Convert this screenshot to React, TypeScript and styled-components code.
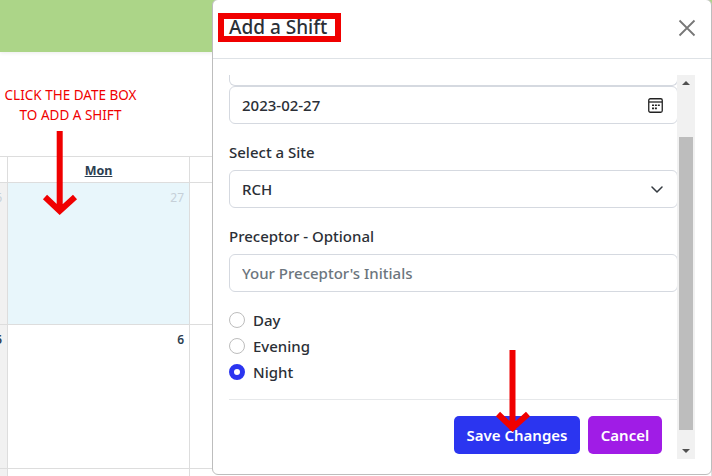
import * as React from 'react';
import styled, { createGlobalStyle } from 'styled-components';

const GlobalStyle = createGlobalStyle`
  html, body {
    margin: 0;
    padding: 0;
    background: #fff;
  }
  * {
    box-sizing: border-box;
  }
`;

const Page = styled.div`
  position: relative;
  width: 712px;
  height: 476px;
  overflow: hidden;
  background: #fff;
  font-family: "Noto Sans", "Open Sans", sans-serif;
`;

const TopBar = styled.div`
  height: 52px;
  background: #acd588;
  box-shadow: 0 1px 4px rgba(0, 0, 0, 0.08);
`;

const Notice = styled.div`
  height: 104px;
  width: 141px;
  padding-top: 33px;
  text-align: center;
  color: #f00000;
  font-size: 13.5px;
  line-height: 20px;
`;

const Calendar = styled.div`
  display: grid;
  grid-template-columns: 8px 182px 1fr;
  grid-template-rows: 26px 142px 144px 10px;
  border-top: 1px solid #ddd;
`;

const Cell = styled.div<{ $bg?: string; $muted?: boolean; $last?: boolean }>`
  display: flex;
  justify-content: flex-end;
  overflow: hidden;
  padding: 6px 5px 0 0;
  background: ${(p) => p.$bg || '#fff'};
  border-right: 1px solid #ddd;
  border-bottom: ${(p) => (p.$last ? 'none' : '1px solid #ddd')};
  color: ${(p) => (p.$muted ? '#c6d0d8' : '#2c3e50')};
  font-size: 12px;
  font-weight: ${(p) => (p.$muted ? 400 : 600)};
  line-height: 17px;
`;

const HeadCell = styled(Cell)`
  justify-content: center;
  padding: 5px 0 0;
  font-size: 12.5px;
  font-weight: 700;
  text-decoration: underline;
`;

const Modal = styled.div`
  position: absolute;
  top: -1px;
  left: 212px;
  width: 500px;
  height: 476px;
  display: flex;
  flex-direction: column;
  background: #fff;
  border: 1px solid #bdbdbd;
  border-radius: 6px;
`;

const ModalHeader = styled.div`
  height: 59px;
  flex: none;
  display: flex;
  align-items: center;
  justify-content: space-between;
  padding: 0 15px 3px 5px;
  border-bottom: 1px solid #dee2e6;
`;

const Title = styled.h2`
  margin: 0;
  width: 123px;
  height: 29px;
  padding-left: 5px;
  border: 6px solid #f00000;
  color: #2b2f36;
  font-size: 19px;
  font-weight: 500;
  line-height: 17px;
  white-space: nowrap;
`;

const CloseButton = styled.button`
  display: flex;
  width: 18px;
  height: 18px;
  padding: 0;
  border: 0;
  background: none;
  color: #777;
`;

const ModalBody = styled.div`
  flex: 1;
  display: flex;
  align-items: flex-start;
  padding: 16px 16px 0 16px;
`;

const Form = styled.form`
  width: 449px;
  height: 384px;
  overflow: hidden;
`;

const ClippedField = styled.div`
  height: 12px;
  margin-top: -1px;
  border: 1px solid #d5d9e0;
  border-top: 0;
  border-radius: 0 0 6px 6px;
`;

const FieldWrap = styled.div`
  position: relative;
`;

const TextInput = styled.input`
  display: block;
  width: 100%;
  height: 38px;
  padding: 0 12px;
  border: 1px solid #d5d9e0;
  border-radius: 6px;
  background: #fff;
  color: #2b2f36;
  font-family: inherit;
  font-size: 15px;
  font-weight: 500;
  outline: none;
  &::placeholder {
    color: #6c757d;
    opacity: 1;
  }
`;

const FieldIcon = styled.span`
  position: absolute;
  top: 0;
  right: 0;
  bottom: 0;
  display: flex;
  align-items: center;
  padding-right: 15px;
  color: #222;
`;

const Label = styled.label`
  display: block;
  margin: 17px 0 7px;
  color: #2b2f36;
  font-size: 15px;
  font-weight: 500;
  line-height: 22px;
`;

const RadioList = styled.div`
  display: flex;
  flex-direction: column;
  gap: 4px;
  margin-top: 17px;
`;

const RadioRow = styled.label`
  display: flex;
  align-items: center;
  gap: 8px;
  height: 22px;
  color: #2b2f36;
  font-size: 15px;
  font-weight: 500;
`;

const Radio = styled.input`
  appearance: none;
  width: 16px;
  height: 16px;
  margin: 0;
  border: 1px solid #bdbdbd;
  border-radius: 50%;
  background: #fff;
  &:checked {
    border: 5px solid #2b35f0;
  }
`;

const Divider = styled.hr`
  margin: 16px 0 16px;
  border: 0;
  border-top: 1px solid #e6e8ea;
`;

const Actions = styled.div`
  display: flex;
  justify-content: flex-end;
  gap: 8px;
  padding-right: 16px;
`;

const ActionButton = styled.button<{ $bg: string; $w: number }>`
  width: ${(p) => p.$w}px;
  height: 38px;
  padding: 0;
  border: 0;
  border-radius: 5px;
  background: ${(p) => p.$bg};
  color: #fff;
  font-family: inherit;
  font-size: 15px;
  font-weight: 600;
`;

const ScrollBar = styled.div`
  width: 18px;
  height: 384px;
  flex: none;
  display: flex;
  flex-direction: column;
  align-items: center;
  justify-content: space-between;
  margin-left: -1px;
  background: #f1f1f1;
  position: relative;
`;

const ScrollArrow = styled.span<{ $down?: boolean }>`
  width: 0;
  height: 0;
  margin: 6px 0;
  border-left: 4px solid transparent;
  border-right: 4px solid transparent;
  ${(p) => (p.$down ? 'border-top: 4px solid #505050;' : 'border-bottom: 4px solid #505050;')}
`;

const ScrollThumb = styled.span`
  position: absolute;
  top: 62px;
  left: 2px;
  width: 14px;
  height: 293px;
  background: #bdbdbd;
`;

const Annotations = styled.svg`
  position: absolute;
  top: 0;
  left: 0;
  pointer-events: none;
`;

function App() {
  return (
    <Page>
      <GlobalStyle />
      <TopBar />
      <Notice>
        CLICK THE DATE BOX
        <br />
        TO ADD A SHIFT
      </Notice>
      <Calendar>
        <HeadCell />
        <HeadCell>Mon</HeadCell>
        <HeadCell />
        <Cell $bg="#f1f1f1" $muted>26</Cell>
        <Cell $bg="#e8f6fb" $muted>27</Cell>
        <Cell />
        <Cell $bg="#f1f1f1">5</Cell>
        <Cell>6</Cell>
        <Cell />
        <Cell $bg="#f1f1f1" $last />
        <Cell $last />
        <Cell $last />
      </Calendar>

      <Modal>
        <ModalHeader>
          <Title>Add a Shift</Title>
          <CloseButton type="button" aria-label="Close">
            <svg width="18" height="18" viewBox="0 0 18 18">
              <path d="M1.5 1.5 L16.5 16.5 M16.5 1.5 L1.5 16.5" stroke="currentColor" strokeWidth="1.8" fill="none" />
            </svg>
          </CloseButton>
        </ModalHeader>
        <ModalBody>
          <Form>
            <ClippedField />
            <FieldWrap>
              <TextInput readOnly value="2023-02-27" />
              <FieldIcon>
                <svg width="15" height="15" viewBox="0 0 15 15">
                  <rect x="0.75" y="0.75" width="13.5" height="13.5" rx="1.5" fill="none" stroke="currentColor" strokeWidth="1.3" />
                  <path d="M1 4 H14" stroke="currentColor" strokeWidth="1.3" />
                  <path d="M4 6.5 h2 v1.6 h-2 z M6.9 6.5 h2 v1.6 h-2 z M9.8 6.5 h2 v1.6 h-2 z M4 9.6 h2 v1.6 h-2 z M6.9 9.6 h2 v1.6 h-2 z" fill="currentColor" />
                </svg>
              </FieldIcon>
            </FieldWrap>
            <Label>Select a Site</Label>
            <FieldWrap>
              <TextInput readOnly value="RCH" />
              <FieldIcon>
                <svg width="12" height="7" viewBox="0 0 12 7">
                  <path d="M1 1 L6 6 L11 1" fill="none" stroke="#343a40" strokeWidth="1.5" strokeLinecap="round" strokeLinejoin="round" />
                </svg>
              </FieldIcon>
            </FieldWrap>
            <Label>Preceptor - Optional</Label>
            <TextInput placeholder="Your Preceptor's Initials" />
            <RadioList>
              <RadioRow><Radio type="radio" name="shift" />Day</RadioRow>
              <RadioRow><Radio type="radio" name="shift" />Evening</RadioRow>
              <RadioRow><Radio type="radio" name="shift" defaultChecked />Night</RadioRow>
            </RadioList>
            <Divider />
            <Actions>
              <ActionButton type="button" $bg="#2b35f0" $w={126}>Save Changes</ActionButton>
              <ActionButton type="button" $bg="#a01ce6" $w={74}>Cancel</ActionButton>
            </Actions>
          </Form>
          <ScrollBar>
            <ScrollArrow />
            <ScrollThumb />
            <ScrollArrow $down />
          </ScrollBar>
        </ModalBody>
      </Modal>

      <Annotations width="712" height="476" viewBox="0 0 712 476">
        <path d="M59.7 131 V210 M45 197 L59.7 211 L75 197" fill="none" stroke="#f00000" strokeWidth="6" />
        <path d="M512.5 350 V430 M498 414 L512.5 428 L528 414" fill="none" stroke="#f00000" strokeWidth="6" />
      </Annotations>
    </Page>
  );
}

export default App;
